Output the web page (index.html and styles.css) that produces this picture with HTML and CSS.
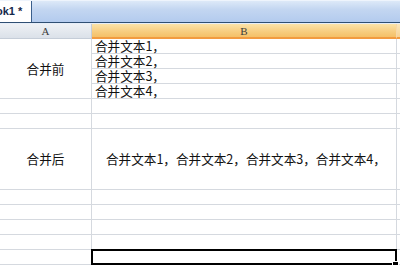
FILE: index.html
```html
<!DOCTYPE html>
<html lang="zh-CN">
<head>
  <title>Book1</title>
  <meta charset="utf-8">
  <link rel="stylesheet" href="styles.css">
</head>
<body>

  <!-- sheet tab strip -->
  <div class="tabs">
    <div class="tab">ok1 *</div>
  </div>

  <!-- grid -->
  <div class="sheet">
    <div class="hd hd-a">A</div>
    <div class="hd hd-b">B</div>
    <div class="hd hd-c"></div>

    <div class="cell mid before">合并前</div>
    <div class="cell txt">合并文本1，</div>
    <div class="cell c"></div>
    <div class="cell txt">合并文本2，</div>
    <div class="cell c"></div>
    <div class="cell txt">合并文本3，</div>
    <div class="cell c"></div>
    <div class="cell txt">合并文本4，</div>
    <div class="cell c"></div>

    <div class="cell"></div><div class="cell"></div><div class="cell c"></div>
    <div class="cell"></div><div class="cell"></div><div class="cell c"></div>

    <div class="cell mid">合并后</div>
    <div class="cell joined">合并文本1，合并文本2，合并文本3，合并文本4，</div>
    <div class="cell c"></div>

    <div class="cell"></div><div class="cell"></div><div class="cell c"></div>
    <div class="cell"></div><div class="cell"></div><div class="cell c"></div>
    <div class="cell"></div><div class="cell"></div><div class="cell c"></div>
    <div class="cell"></div><div class="cell"></div><div class="cell c"></div>

    <div class="cell"></div><div class="cell sel"></div><div class="cell c"></div>
  </div>

</body>
</html>
```

FILE: styles.css
```css
body {
  margin: 0;
  background: #fff;
  font-family: "Noto Sans CJK SC", sans-serif;
  overflow: hidden;
}

.tabs {
  height: 23px;
  box-sizing: border-box;
  background: linear-gradient(#dde9f8, #c3d6f1 40%, #b3cbee);
  border-top: 1px solid #eef4fc;
  border-bottom: 1px solid #2f4f73;
  display: flex;
}

.tab {
  width: 31px;
  background: #fff;
  border-right: 1px solid #3a5f8c;
  font-family: "Liberation Sans", sans-serif;
  font-size: 11px;
  font-weight: bold;
  color: #15294b;
  line-height: 21px;
  text-indent: -4px;
  white-space: nowrap;
  overflow: hidden;
}

.sheet {
  border-top: 1px solid #e6eef9;
  display: grid;
  grid-template-columns: 92px 305px 1fr;
  grid-template-rows: 15px repeat(6, 15px) 61px repeat(5, 15px);
}

.hd {
  font-family: "Liberation Serif", serif;
  font-size: 11px;
  line-height: 14px;
  text-align: center;
  color: #3b3b3b;
  box-sizing: border-box;
}

.hd-a {
  background: linear-gradient(#eef1f5, #dbe1e9);
  border-right: 1px solid #c5cdd8;
  border-bottom: 1px solid #c5cdd8;
}

.hd-b {
  background: linear-gradient(#fbe3a9, #f7cc7e 60%, #f4c067);
  border-right: 1px solid #f6d7a8;
  border-bottom: 2px solid #f29b40;
}

.hd-c {
  background: linear-gradient(#fbe7bc, #f7d293);
  border-bottom: 2px solid #f29b40;
}

.cell {
  box-sizing: border-box;
  border-right: 1px solid #d5d9df;
  border-bottom: 1px solid #d5d9df;
  font-size: 12.6px;
  line-height: 14px;
  color: #111;
  white-space: nowrap;
}

.cell.c {
  border-right: none;
}

.txt {
  padding-left: 3px;
}

.mid {
  display: flex;
  align-items: center;
  justify-content: center;
}

.joined {
  display: flex;
  align-items: center;
  padding-left: 14px;
}

.before {
  grid-row: span 4;
}

.sel {
  position: relative;
}

.sel::after {
  content: "";
  position: absolute;
  left: -1px;
  top: -1px;
  right: -1px;
  bottom: -1px;
  border: 2px solid #000;
}

.sel::before {
  content: "";
  position: absolute;
  right: -3px;
  bottom: -4px;
  width: 5px;
  height: 5px;
  background: #000;
  border: 1px solid #fff;
  z-index: 1;
}
```
